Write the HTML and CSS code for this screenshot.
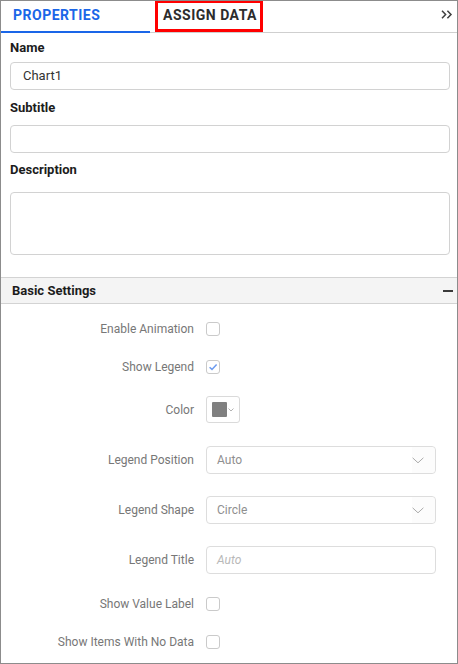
FILE: index.html
```html
<!DOCTYPE html>
<html>
<head>
<meta charset="utf-8">
<link rel="stylesheet" href="styles.css">
</head>
<body>
<div class="panel">
  <div class="tabs">
    <div class="tab tab-active">PROPERTIES</div>
    <div class="tab tab-marked">ASSIGN DATA</div>
    <div class="tabs-spacer"></div>
    <svg class="collapse" width="12" height="9" viewBox="0 0 12 9"><path d="M1 0.8 L4.6 4.5 L1 8.2 M6.4 0.8 L10 4.5 L6.4 8.2" fill="none" stroke="#3f3f3f" stroke-width="1.5"/></svg>
  </div>

  <div class="form">
    <div class="field-label lbl-name">Name</div>
    <div class="text-input in-name">Chart1</div>
    <div class="field-label lbl-sub">Subtitle</div>
    <div class="text-input in-sub"></div>
    <div class="field-label lbl-desc">Description</div>
    <div class="text-area"></div>
  </div>

  <div class="section-head">
    <span>Basic Settings</span>
    <span class="minus"></span>
  </div>

  <div class="settings">
    <div class="row row-check">
      <div class="row-label">Enable Animation</div>
      <div class="checkbox"></div>
    </div>
    <div class="row row-check">
      <div class="row-label">Show Legend</div>
      <div class="checkbox"><svg width="12" height="12" viewBox="0 0 12 12"><path d="M2.6 6.2 L5 8.4 L9.6 3.4" fill="none" stroke="#6c9bf0" stroke-width="1.5"/></svg></div>
    </div>
    <div class="row row-color">
      <div class="row-label">Color</div>
      <div class="color-pick">
        <span class="swatch"></span>
        <svg width="6" height="4" viewBox="0 0 6 4"><path d="M0.5 0.5 L3 3 L5.5 0.5" fill="none" stroke="#aaa" stroke-width="0.9"/></svg>
      </div>
    </div>
    <div class="row row-box">
      <div class="row-label">Legend Position</div>
      <div class="dropdown"><span class="dd-value">Auto</span><span class="dd-icon"><svg width="12" height="7" viewBox="0 0 12 7"><path d="M0.6 0.8 L6 5.8 L11.4 0.8" fill="none" stroke="#aaa" stroke-width="1"/></svg></span></div>
    </div>
    <div class="row row-box">
      <div class="row-label">Legend Shape</div>
      <div class="dropdown"><span class="dd-value">Circle</span><span class="dd-icon"><svg width="12" height="7" viewBox="0 0 12 7"><path d="M0.6 0.8 L6 5.8 L11.4 0.8" fill="none" stroke="#aaa" stroke-width="1"/></svg></span></div>
    </div>
    <div class="row row-box">
      <div class="row-label">Legend Title</div>
      <div class="dropdown"><span class="placeholder">Auto</span></div>
    </div>
    <div class="row row-check">
      <div class="row-label">Show Value Label</div>
      <div class="checkbox"></div>
    </div>
    <div class="row row-check">
      <div class="row-label">Show Items With No Data</div>
      <div class="checkbox"></div>
    </div>
  </div>
</div>
</body>
</html>
```

FILE: styles.css
```css
html, body {
  margin: 0;
  padding: 0;
  background: #ffffff;
}

body {
  font-family: Roboto, "Liberation Sans", Arial, sans-serif;
}

.panel {
  box-sizing: border-box;
  width: 458px;
  height: 664px;
  border: 1px solid #8c8c8c;
  background: #ffffff;
  overflow: hidden;
}

/* Tabs */
.tabs {
  display: flex;
  align-items: flex-start;
  height: 31px;
  border-bottom: 1px solid #cfcfcf;
}

.tab {
  box-sizing: border-box;
  font-size: 14px;
  font-weight: 700;
  letter-spacing: 0.5px;
  line-height: 20px;
}

.tab-active {
  width: 149px;
  height: 32px;
  padding: 4px 0 0 12px;
  color: #1a66e8;
  border-bottom: 2px solid #1a66e8;
}

.tab-marked {
  margin-left: 5px;
  margin-top: -1px;
  height: 32px;
  padding: 2px 3px 0 5px;
  color: #2c2c2c;
  border: 3px solid #ff0000;
}

.tabs-spacer {
  flex: 1;
}

.collapse {
  margin-top: 9px;
  margin-right: 4px;
}

/* Form */
.form {
  padding: 0 7px 0 9px;
}

.field-label {
  font-size: 13px;
  font-weight: 700;
  line-height: 20px;
  color: #1c1c1c;
}

.lbl-name { margin-top: 5px; }
.lbl-sub { margin-top: 8px; }
.lbl-desc { margin-top: 7px; }

.text-input {
  box-sizing: border-box;
  height: 28px;
  border: 1px solid #d2d2d2;
  border-radius: 4px;
  padding: 0 12px;
  font-size: 13px;
  line-height: 26px;
  color: #333333;
}

.in-name { margin-top: 4px; }
.in-sub { margin-top: 7px; }

.text-area {
  box-sizing: border-box;
  margin-top: 12px;
  height: 63px;
  border: 1px solid #d2d2d2;
  border-radius: 4px;
}

/* Section header */
.section-head {
  margin-top: 22px;
  height: 25px;
  display: flex;
  align-items: center;
  justify-content: space-between;
  padding: 0 4px 0 11px;
  background: #f4f4f4;
  border-top: 1px solid #d3d3d3;
  border-bottom: 1px solid #d3d3d3;
  font-size: 13px;
  font-weight: 700;
  color: #1c1c1c;
}

.minus {
  width: 10px;
  height: 2px;
  background: #3a3a3a;
}

/* Settings */
.settings {
  display: flex;
  flex-direction: column;
  gap: 22px;
  padding-top: 17px;
}

.row {
  display: flex;
  align-items: center;
  gap: 12px;
}

.row-check { height: 16px; }
.row-color { height: 27px; margin-top: -1px; margin-bottom: 1px; }
.row-box { height: 28px; }

.row-label {
  width: 193px;
  text-align: right;
  font-size: 12px;
  color: #777777;
  white-space: nowrap;
}

.checkbox {
  box-sizing: border-box;
  width: 14px;
  height: 14px;
  border: 1px solid #cacaca;
  border-radius: 3px;
  display: flex;
  align-items: center;
  justify-content: center;
}

.color-pick {
  box-sizing: border-box;
  width: 34px;
  height: 27px;
  border: 1px solid #dadada;
  border-radius: 3px;
  display: flex;
  align-items: center;
  padding-left: 5px;
  gap: 1px;
}

.swatch {
  width: 15px;
  height: 15px;
  background: #808080;
  border-radius: 1px;
}

.dropdown {
  box-sizing: border-box;
  width: 230px;
  height: 28px;
  border: 1px solid #dddddd;
  border-radius: 4px;
  display: flex;
  align-items: center;
  padding-left: 10px;
  font-size: 12px;
}

.dd-value {
  flex: 1;
  color: #8f8f8f;
}

.dd-icon {
  width: 23px;
  height: 26px;
  display: flex;
  align-items: center;
  justify-content: flex-start;
  background: #fcfcfc;
  border-radius: 0 4px 4px 0;
}

.placeholder {
  color: #b8b8b8;
  font-style: italic;
}
```
